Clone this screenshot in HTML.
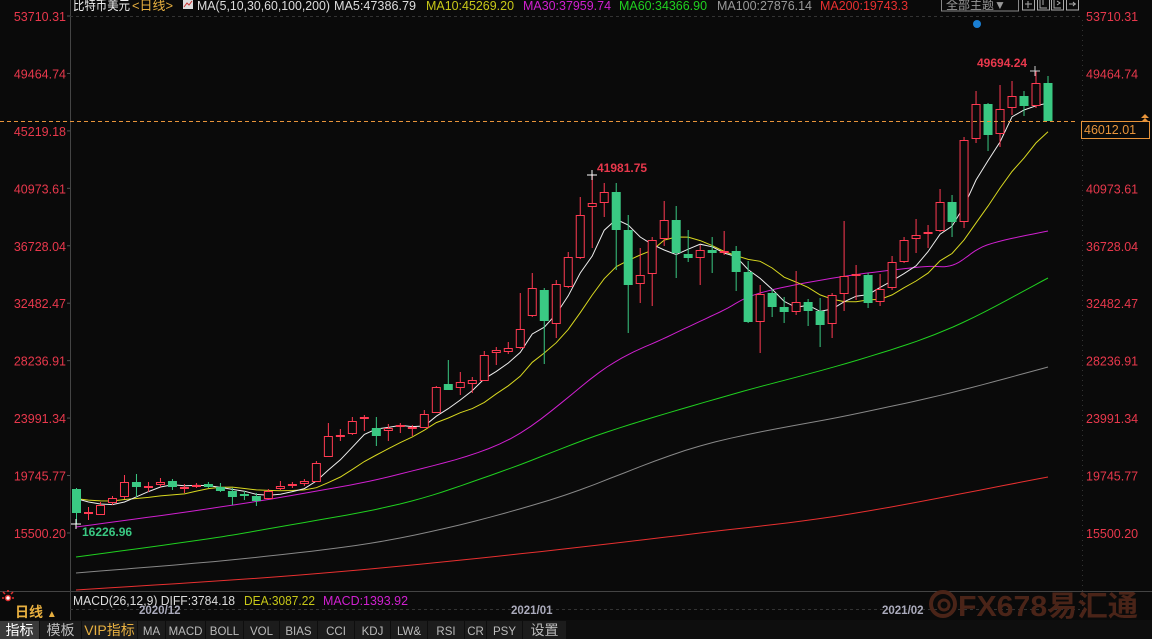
<!DOCTYPE html>
<html><head><meta charset="utf-8"><style>
body{margin:0;background:#0a0a0a;width:1152px;height:639px;overflow:hidden;font-family:"Liberation Sans","Noto Sans CJK SC",sans-serif;}
svg{position:absolute;left:0;top:0}
text{font-family:"Liberation Sans","Noto Sans CJK SC",sans-serif}
</style></head><body>
<svg id="s" width="1152" height="639" xmlns="http://www.w3.org/2000/svg">
<rect width="1152" height="639" fill="#0a0a0a"/>
<line x1="70.5" y1="0" x2="70.5" y2="620" stroke="#444"/>
<line x1="0" y1="591.5" x2="1152" y2="591.5" stroke="#444"/>
<line x1="70" y1="16.5" x2="1080" y2="16.5" stroke="#333" stroke-dasharray="3,3"/>
<line x1="1082.5" y1="20" x2="1082.5" y2="620" stroke="#333" stroke-dasharray="1,4"/>
<line x1="70" y1="609.5" x2="1080" y2="609.5" stroke="#333" stroke-dasharray="3,3"/>
<g id="axes" font-size="12.5" fill="#e8384c"></g>
<g id="ma"></g>
<g id="c"></g>
<line x1="0" y1="121.5" x2="1078" y2="121.5" stroke="#e8943a" stroke-dasharray="4,3"/>
<rect x="1081.5" y="121.5" width="68" height="17" fill="#0a0a0a" stroke="#e8943a"/>
<text x="1084" y="134" font-size="12.5" fill="#e8943a">46012.01</text>
<path d="M1141 118 l4 -4 l4 4 z M1141 122 l4 -4 l4 4 z" fill="#e8943a"/>
<text x="82" y="536" font-size="12" font-weight="bold" fill="#3ac983">16226.96</text>
<text x="597" y="172" font-size="12" font-weight="bold" fill="#e8384c">41981.75</text>
<text x="977" y="67" font-size="12" font-weight="bold" fill="#e8384c">49694.24</text>
<path d="M587 175h10M592 170v10" stroke="#fff"/>
<path d="M1030 71h10M1035 66v10" stroke="#fff" opacity=".8"/>
<path d="M71 524h10M76 519v10" stroke="#fff"/>
<circle cx="977" cy="24" r="4" fill="#1a7fd4"/>
<g font-size="13">
<text x="73" y="10" fill="#eee" textLength="57" lengthAdjust="spacingAndGlyphs">比特币美元</text>
<text x="132" y="10" fill="#e8b040" textLength="41" lengthAdjust="spacingAndGlyphs">&lt;日线&gt;</text>
<text x="197" y="10" fill="#ddd" textLength="133" lengthAdjust="spacingAndGlyphs">MA(5,10,30,60,100,200)</text>
<text x="334" y="10" fill="#ddd" textLength="82" lengthAdjust="spacingAndGlyphs">MA5:47386.79</text>
<text x="426" y="10" fill="#c8c818" textLength="88" lengthAdjust="spacingAndGlyphs">MA10:45269.20</text>
<text x="523" y="10" fill="#d020d0" textLength="88" lengthAdjust="spacingAndGlyphs">MA30:37959.74</text>
<text x="619" y="10" fill="#20d020" textLength="88" lengthAdjust="spacingAndGlyphs">MA60:34366.90</text>
<text x="717" y="10" fill="#999" textLength="95" lengthAdjust="spacingAndGlyphs">MA100:27876.14</text>
<text x="820" y="10" fill="#e83030" textLength="88" lengthAdjust="spacingAndGlyphs">MA200:19743.3</text>
</g>
<rect x="183" y="0" width="10" height="9" fill="#ddd"/><path d="M184 7l3-4 2 2 3-4" stroke="#c33" fill="none"/>
<rect x="941.5" y="-2" width="77" height="13" fill="none" stroke="#888"/>
<text x="946" y="9" font-size="12" fill="#999">全部主题▼</text>
<g fill="none" stroke="#aaa"><rect x="1022.5" y="-2" width="12" height="12"/><rect x="1037.5" y="-2" width="12" height="12"/><rect x="1051.5" y="-2" width="12" height="12"/><rect x="1066.5" y="-2" width="12" height="12"/>
<path d="M1025 4h7M1028 1v7M1040 0v8h7M1043 0v5M1054 0v8h7M1057 1l3 2-3 2M1069 4h7M1073 2l2 2-2 2"/></g>
<g stroke="#e03030" stroke-width="1.5"><circle cx="8" cy="598" r="2.5" fill="#fff"/><path d="M3 592l2 2M13 592l-2 2M8 590v2M2 598h2M12 598h2"/></g>
<g font-size="12.5">
<text x="73" y="605" fill="#ddd" textLength="162" lengthAdjust="spacingAndGlyphs">MACD(26,12,9) DIFF:3784.18</text>
<text x="244" y="605" fill="#c8c818" textLength="71" lengthAdjust="spacingAndGlyphs">DEA:3087.22</text>
<text x="323" y="605" fill="#d020d0" textLength="85" lengthAdjust="spacingAndGlyphs">MACD:1393.92</text>
</g>
<text x="15" y="617" font-size="14" font-weight="bold" fill="#e8b040">日线 <tspan font-size="10">▲</tspan></text>
<g font-size="11.5" font-weight="bold" fill="#aab"><text x="139" y="614">2020/12</text><text x="511" y="614">2021/01</text><text x="882" y="614">2021/02</text></g>
<g><circle cx="943" cy="604" r="12" fill="none" stroke="#4a2418" stroke-width="4"/><circle cx="944" cy="605" r="5" fill="none" stroke="#4a2418" stroke-width="3"/>
<text x="958" y="616" font-size="29" font-weight="bold" fill="#4a2418" textLength="180" lengthAdjust="spacingAndGlyphs">FX678易汇通</text></g>
<rect x="0" y="620" width="1152" height="19" fill="#0e0e0e"/>
<g id="tabs" font-size="12"></g>
</svg>
<script>
const NS="http://www.w3.org/2000/svg";
function el(p,t,a,txt){const e=document.createElementNS(NS,t);for(const k in a)e.setAttribute(k,a[k]);if(txt)e.textContent=txt;p.appendChild(e);return e;}
const ax=document.getElementById('axes');
const labs=["53710.31","49464.74","45219.18","40973.61","36728.04","32482.47","28236.91","23991.34","19745.77","15500.20"];
labs.forEach((l,i)=>{const y=16+i*57.44;el(ax,'text',{x:66,y:y+5,'text-anchor':'end'},l);el(ax,'text',{x:1086,y:y+5},l);el(ax,'line',{x1:67,y1:y,x2:70,y2:y,stroke:'#555'});});
const D=[['g',489,513,488,524],['r',512,514,507,520],['r',505,515,502,515],['r',498,503,496,505],['r',482,497,475,499],['g',482,487,474,497],['r',486,488,482,492],['r',482,485,478,487],['g',481,487,479,490],['r',487,489,484,493],['r',485,487,483,488],['g',484,487,482,488],['g',487,491,483,492],['g',491,497,488,505],['g',494,496,491,500],['g',496,501,493,506],['r',491,499,489,499],['r',486,489,481,490],['r',484,486,482,488],['r',481,484,479,486],['r',463,482,461,482],['r',436,457,423,457],['r',435,437,429,441],['r',421,434,417,435],['r',417,419,415,431],['g',428,436,417,446],['r',428,431,424,441],['r',425,427,423,433],['r',427,429,425,436],['r',414,428,410,428],['r',387,413,386,413],['g',384,390,360,390],['r',382,388,372,395],['r',380,384,377,393],['r',355,381,351,381],['r',350,353,347,365],['r',348,352,342,354],['r',329,348,293,349],['r',288,316,273,317],['g',290,321,288,364],['r',284,324,280,338],['r',257,287,252,288],['r',215,258,197,259],['r',203,207,175,248],['r',192,203,183,217],['g',192,230,183,270],['g',230,285,215,333],['r',275,284,248,303],['r',240,274,237,306],['r',220,239,201,246],['g',220,253,206,278],['g',254,258,230,262],['r',250,258,245,285],['g',250,253,237,273],['r',251,253,231,255],['g',251,272,246,291],['g',272,322,261,323],['r',294,322,285,353],['g',293,307,289,317],['g',307,312,297,323],['r',302,312,271,315],['g',302,311,299,326],['g',311,325,298,347],['r',295,324,293,338],['r',276,294,221,311],['r',274,276,265,300],['g',275,303,273,308],['r',289,302,274,306],['r',262,288,256,290],['r',240,262,237,263],['r',235,239,219,253],['r',232,234,225,248],['r',202,231,189,232],['g',202,222,195,237],['r',140,222,137,228],['r',104,139,91,143],['g',104,135,103,151],['r',109,134,85,147],['r',96,108,81,115],['g',96,106,91,116],['r',83,106,71,108],['g',83,121,76,121]];
const N=D.length, sp=(1048-76.5)/(N-1);
const cg=document.getElementById('c');
const closes=[];
D.forEach((d,i)=>{const x=76.5+sp*i;const col=d[0]=='r'?'#ff3a52':'#3ac983';
 closes.push(d[0]=='r'?d[1]:d[2]);
 el(cg,'line',{x1:x,y1:d[3],x2:x,y2:d[4],stroke:col});
 const h=Math.max(d[2]-d[1],1);
 if(d[0]=='r')el(cg,'rect',{x:x-4,y:d[1]+.5,width:8,height:Math.max(h-1,0.5),fill:'#0a0a0a',stroke:col});
 else el(cg,'rect',{x:x-4.5,y:d[1],width:9,height:h,fill:col});
});
const mg=document.getElementById('ma');
function ma(n,pad){const arr=[];for(let i=0;i<N;i++){let s=0;for(let k=0;k<n;k++){const j=i-k;s+=j>=0?closes[j]:pad;}arr.push(s/n);}return arr;}
function poly(arr,col){el(mg,'polyline',{points:arr.map((y,i)=>(76.5+sp*i)+','+y).join(' '),fill:'none',stroke:col,'stroke-width':1});}
function pts(p,col){el(mg,'polyline',{points:p.map(a=>a.join(',')).join(' '),fill:'none',stroke:col,'stroke-width':1});}
function smooth(p){const out=[];for(let k=0;k<p.length-1;k++){const p0=p[Math.max(k-1,0)],p1=p[k],p2=p[k+1],p3=p[Math.min(k+2,p.length-1)];for(let t=0;t<1;t+=0.1){const t2=t*t,t3=t2*t;const f=(a,b,c,d)=>0.5*((2*b)+(-a+c)*t+(2*a-5*b+4*c-d)*t2+(-a+3*b-3*c+d)*t3);out.push([f(p0[0],p1[0],p2[0],p3[0]).toFixed(1),f(p0[1],p1[1],p2[1],p3[1]).toFixed(1)]);}}out.push(p[p.length-1]);return out;}
pts(smooth([[76,590],[300,575],[500,556],[700,533],[850,514],[1048,477]]),'#e83030');
pts(smooth([[76,573],[250,558],[400,538],[550,500],[700,446],[850,415],[950,393],[1048,367]]),'#888');
pts(smooth([[76,557],[200,540],[267,529],[400,504],[500,472],[607,432],[730,395],[858,360],[953,327],[1048,278]]),'#20d020');
pts(smooth([[76,527],[200,510],[300,494],[400,474],[510,439],[607,367],[667,337],[720,312],[760,293],[840,277],[920,267],[953,265],[987,245],[1048,231]]),'#d020d0');
poly(ma(10,497),'#d8d820');
poly(ma(5,495),'#eeeeee');
const tg=document.getElementById('tabs');
const tabs=[['指标',0,39],['模板',40,81],['VIP指标',82,137],['MA',138,165],['MACD',166,205],['BOLL',206,243],['VOL',244,279],['BIAS',280,317],['CCI',318,354],['KDJ',355,390],['LW&',391,427],['RSI',428,464],['CR',465,486],['PSY',487,522],['设置',523,566]];
tabs.forEach((t,i)=>{el(tg,'rect',{x:t[1],y:621,width:t[2]-t[1],height:18,fill:i==0?'#3a3a3a':'#1c1c1c'});
 const cj=(i<3||i==14);
 el(tg,'text',{x:(t[1]+t[2])/2,y:635,'text-anchor':'middle',fill:i==2?'#e8b040':(i==0?'#fff':'#bbb'),'font-size':cj?14:11.5,'font-family':cj?'"Liberation Sans","Noto Sans CJK SC",sans-serif':'"Liberation Serif",serif'},t[0]);});
</script>
</body></html>
